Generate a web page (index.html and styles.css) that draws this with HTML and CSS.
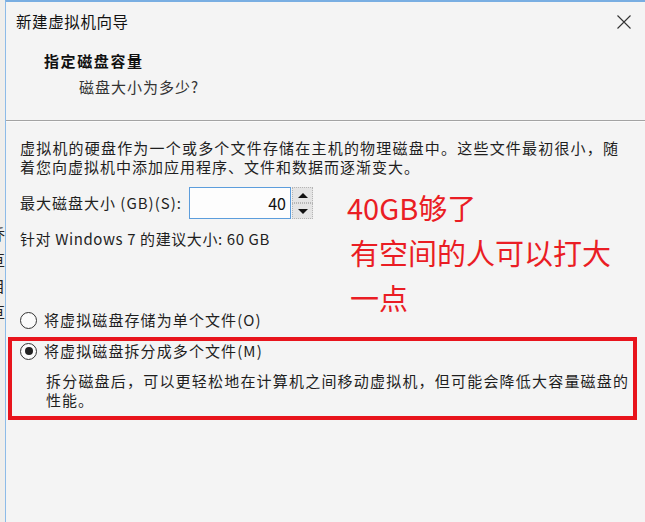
FILE: index.html
```html
<!DOCTYPE html>
<html lang="zh-CN">
<head>
<meta charset="utf-8">
<title>新建虚拟机向导</title>
<link rel="stylesheet" href="styles.css">
</head>
<body>
<div class="strip">
  <span>0</span><span> </span><span>C</span><span>E</span><span>乔</span><span>亘</span><span>目</span><span>亘</span>
</div>
<div class="dialog">
  <div class="titlebar">
    <span class="title">新建虚拟机向导</span>
    <svg class="close" width="14" height="14" viewBox="0 0 14 14"><path d="M0.5 0.5 L13.5 13.5 M13.5 0.5 L0.5 13.5" stroke="#333" stroke-width="1.1" fill="none"/></svg>
  </div>
  <div class="header">
    <div class="h-title">指定磁盘容量</div>
    <div class="h-sub">磁盘大小为多少?</div>
  </div>
  <div class="sep"></div>
  <div class="content">
    <p class="intro"><span class="jline">虚拟机的硬盘作为一个或多个文件存储在主机的物理磁盘中。这些文件最初很小，随</span><span class="line">着您向虚拟机中添加应用程序、文件和数据而逐渐变大。</span></p>
    <div class="sizerow">
      <span class="label">最大磁盘大小 (GB)(S):</span>
      <div class="spin">
        <div class="spin-input">40</div>
        <div class="spin-btns">
          <div class="spin-btn"><span class="arrow-up"></span></div>
          <div class="spin-btn"><span class="arrow-down"></span></div>
        </div>
      </div>
    </div>
    <div class="recommend">针对 Windows 7 的建议大小: 60 GB</div>
    <div class="radio"><span class="circle"></span><span>将虚拟磁盘存储为单个文件(O)</span></div>
    <div class="highlight">
      <div class="radio"><span class="circle checked"></span><span>将虚拟磁盘拆分成多个文件(M)</span></div>
      <p class="desc"><span class="jline2">拆分磁盘后，可以更轻松地在计算机之间移动虚拟机，但可能会降低大容量磁盘的</span><span class="line">性能。</span></p>
    </div>
  </div>
  <div class="note">40GB够了<br><span class="n2">有空间的人可以打大</span><br><span class="n2">一点</span></div>
</div>
</body>
</html>
```

FILE: styles.css
```css
html, body {
  margin: 0;
  padding: 0;
}

body {
  display: flex;
  width: 645px;
  height: 522px;
  overflow: hidden;
  font-family: "Noto Sans CJK SC", "Noto Sans", sans-serif;
  color: #1e1e1e;
  background: #f4f4f4;
}

.strip {
  width: 5px;
  flex: none;
  background: #efeeec;
  overflow: hidden;
  display: flex;
  flex-direction: column;
  padding-top: 117px;
  font-size: 15px;
  line-height: 26px;
  color: #222;
}

.strip span {
  display: block;
  height: 26px;
  margin-left: -10px;
  white-space: pre;
}

.dialog {
  flex: 1;
  position: relative;
  display: flex;
  flex-direction: column;
  border-top: 2px solid #79aee2;
  border-left: 1px solid #8dbbe8;
  background: #f4f4f4;
}

.titlebar {
  display: flex;
  align-items: center;
  justify-content: space-between;
  padding: 8px 14px 0 10px;
  height: 22px;
}

.title {
  font-size: 15.5px;
  letter-spacing: 0.6px;
  line-height: 20px;
  color: #111;
}

.close {
  display: block;
  margin-top: 2px;
}

.header {
  padding-top: 19px;
  box-sizing: border-box;
  height: 88px;
}

.h-title {
  margin-left: 38px;
  font-size: 15px;
  font-weight: bold;
  letter-spacing: 1.6px;
  line-height: 20px;
  color: #111;
}

.h-sub {
  margin-left: 73px;
  margin-top: 6px;
  font-size: 15px;
  letter-spacing: 1px;
  line-height: 20px;
  color: #333;
}

.sep {
  height: 0;
  border-top: 1px solid #a3a3a3;
  border-bottom: 1px solid #fbfbfb;
}

.content {
  padding: 0 8px 0 14px;
  font-size: 15px;
  color: #1f1f1f;
}

.intro {
  margin: 16px 0 0 0;
  line-height: 19px;
  letter-spacing: 1px;
}

.jline {
  display: block;
  width: 598px;
  text-align: justify;
  text-align-last: justify;
  letter-spacing: 0;
}

.line {
  display: block;
}

.sizerow {
  display: flex;
  align-items: center;
  margin-top: 11px;
  height: 32px;
}

.label {
  width: 169px;
  flex: none;
  letter-spacing: 1px;
  line-height: 20px;
}

.spin {
  display: flex;
  height: 32px;
}

.spin-input {
  width: 96px;
  height: 30px;
  border: 1px solid #5c9ddc;
  background: #fdfdfd;
  box-sizing: content-box;
  padding-right: 4px;
  text-align: right;
  font-size: 16px;
  line-height: 30px;
  color: #111;
}

.spin-btns {
  width: 21px;
  display: flex;
  flex-direction: column;
  margin-left: 1px;
}

.spin-btn {
  flex: 1;
  display: flex;
  align-items: center;
  justify-content: center;
  background: #e4e4e4;
  border: 1px dotted #b5b5b5;
}

.arrow-up {
  width: 0;
  height: 0;
  border-left: 5px solid transparent;
  border-right: 5px solid transparent;
  border-bottom: 5px solid #111;
}

.arrow-down {
  width: 0;
  height: 0;
  border-left: 5px solid transparent;
  border-right: 5px solid transparent;
  border-top: 5px solid #111;
}

.recommend {
  margin-top: 10px;
  line-height: 20px;
  letter-spacing: 0.6px;
}

.radio {
  display: flex;
  align-items: center;
  height: 20px;
  margin-top: 61px;
  letter-spacing: 1.1px;
  line-height: 20px;
}

.circle {
  width: 15px;
  height: 15px;
  flex: none;
  border: 1px solid #333;
  border-radius: 50%;
  background: #fbfbfb;
  margin-right: 7px;
  display: flex;
  align-items: center;
  justify-content: center;
}

.circle.checked::after {
  content: "";
  width: 8px;
  height: 8px;
  border-radius: 50%;
  background: #222;
}

.highlight {
  margin: 7px 0 0 -12px;
  border: 4px solid #e8141c;
  height: 75px;
  padding: 0 0 0 8px;
}

.highlight .radio {
  margin-top: 0;
}

.desc {
  margin: 10px 0 0 26px;
  line-height: 19px;
  letter-spacing: 1px;
}

.jline2 {
  display: block;
  width: 582px;
  text-align: justify;
  text-align-last: justify;
  letter-spacing: 0;
}

.note {
  position: absolute;
  left: 341px;
  top: 183px;
  font-size: 29px;
  line-height: 45px;
  color: #ea1d24;
}

.n2 {
  margin-left: 3px;
}
```
